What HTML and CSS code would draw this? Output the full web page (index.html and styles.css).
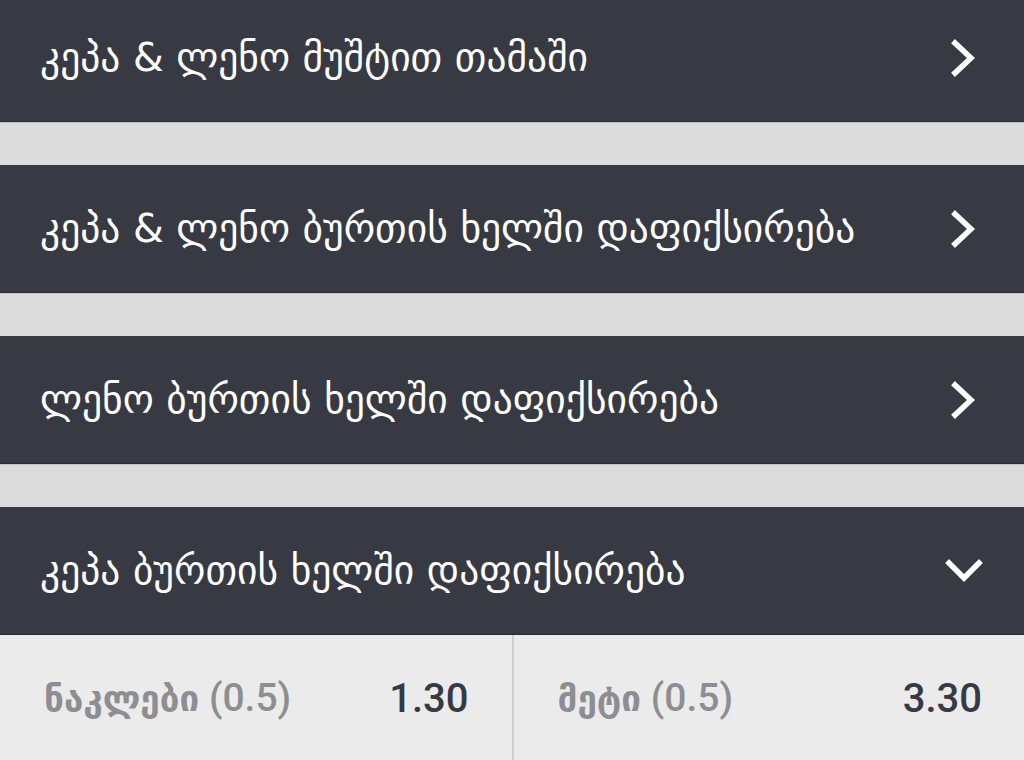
FILE: index.html
```html
<!DOCTYPE html>
<html lang="ka">
<head>
<meta charset="utf-8">
<link rel="stylesheet" href="styles.css">
</head>
<body>
<div class="list">
  <div class="row first">
    <span class="title">კეპა &amp; ლენო მუშტით თამაში</span>
    <svg class="chev" width="28" height="40" viewBox="0 0 28 40"><path d="M5 5 L21 20 L5 35" fill="none" stroke="#fff" stroke-width="5.5" stroke-linecap="square" stroke-linejoin="miter"/></svg>
  </div>
  <div class="gap"></div>
  <div class="row">
    <span class="title">კეპა &amp; ლენო ბურთის ხელში დაფიქსირება</span>
    <svg class="chev" width="28" height="40" viewBox="0 0 28 40"><path d="M5 5 L21 20 L5 35" fill="none" stroke="#fff" stroke-width="5.5" stroke-linecap="square" stroke-linejoin="miter"/></svg>
  </div>
  <div class="gap"></div>
  <div class="row">
    <span class="title">ლენო ბურთის ხელში დაფიქსირება</span>
    <svg class="chev" width="28" height="40" viewBox="0 0 28 40"><path d="M5 5 L21 20 L5 35" fill="none" stroke="#fff" stroke-width="5.5" stroke-linecap="square" stroke-linejoin="miter"/></svg>
  </div>
  <div class="gap"></div>
  <div class="row open">
    <span class="title">კეპა ბურთის ხელში დაფიქსირება</span>
    <svg class="chev down" width="40" height="28" viewBox="0 0 40 28"><path d="M5 6 L20 21 L35 6" fill="none" stroke="#fff" stroke-width="5.5" stroke-linecap="square" stroke-linejoin="miter"/></svg>
  </div>
  <div class="odds">
    <div class="cell">
      <span class="label"><span class="ka">ნაკლები</span> (0.5)</span>
      <span class="val">1.30</span>
    </div>
    <div class="cell">
      <span class="label"><span class="ka">მეტი</span> (0.5)</span>
      <span class="val">3.30</span>
    </div>
  </div>
</div>
</body>
</html>
```
FILE: styles.css
```css
html, body {
  margin: 0;
  padding: 0;
  background: #ebebeb;
  overflow: hidden;
}
.list {
  width: 1024px;
  height: 760px;
  overflow: hidden;
  display: flex;
  flex-direction: column;
}
.row {
  flex: none;
  height: 127px;
  background: #373a42;
  border-bottom: 1px solid #2a2c32;
  display: flex;
  align-items: center;
  justify-content: space-between;
  padding: 0 46px 0 40px;
}
.row.first {
  margin-top: -6px;
}
.row.open {
  padding-right: 40px;
}
.title {
  font-family: "DejaVu Sans", sans-serif;
  font-size: 39.5px;
  color: #ffffff;
  line-height: 1;
}
.chev {
  flex: none;
  display: block;
}
.gap {
  flex: none;
  height: 42px;
  background: #dcdcdc;
  border-top: 1px solid #c4c4c4;
}
.odds {
  flex: none;
  height: 126px;
  display: flex;
  background: #ebebeb;
}
.cell {
  flex: 1;
  display: flex;
  align-items: center;
  justify-content: space-between;
  padding: 0 43px 0 44px;
}
.cell + .cell {
  border-left: 2px solid #cfcfcf;
  padding-right: 42px;
}
.label {
  font-family: Roboto, "DejaVu Sans", sans-serif;
  font-size: 39px;
  color: #8e8e92;
  font-weight: 500;
}
.ka {
  font-family: "DejaVu Sans", sans-serif;
  font-weight: 700;
  font-size: 35px;
}
.val {
  font-family: Roboto, sans-serif;
  font-size: 40px;
  font-weight: 500;
  color: #373a42;
}
```
